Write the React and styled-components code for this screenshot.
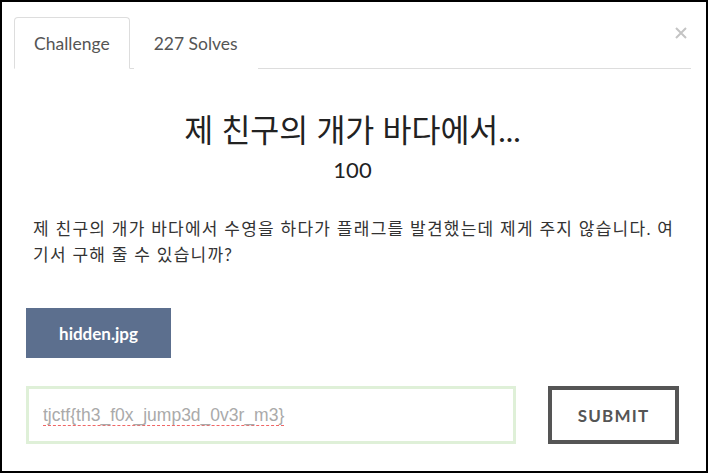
import React from "react";
import styled, { createGlobalStyle } from "styled-components";

const Global = createGlobalStyle`
  * { box-sizing: border-box; }
  html, body { margin: 0; padding: 0; background: #fff; }
  body { font-family: Lato, "Noto Sans CJK KR", sans-serif; color: #333; }
`;

const Frame = styled.div`
  width: 708px;
  height: 473px;
  border: 2px solid #000;
  background: #fff;
  position: relative;
  overflow: hidden;
`;

const Header = styled.div`
  padding: 15px 15px 0 12px;
`;

const TabList = styled.div`
  display: flex;
  border-bottom: 1px solid #ddd;
`;

const Tab = styled.div`
  height: 52px;
  padding: 0 19px;
  margin-right: 4px;
  margin-bottom: -1px;
  display: flex;
  align-items: center;
  font-family: Lato, sans-serif;
  font-size: 17.5px;
  color: #555;
  border: 1px solid ${(p) => (p.$active ? "#ddd" : "transparent")};
  border-bottom-color: ${(p) => (p.$active ? "#fff" : "transparent")};
  border-radius: 4px 4px 0 0;
  background: #fff;
`;

const Close = styled.button`
  position: absolute;
  top: 23px;
  right: 17px;
  width: 16px;
  height: 16px;
  padding: 0;
  border: 0;
  background: transparent;
  display: flex;
  align-items: center;
  justify-content: center;
`;

const Body = styled.div`
  padding: 0 27px 0 24px;
`;

const Title = styled.h1`
  margin: 39px 0 0;
  text-align: center;
  font-family: Lato, "Noto Sans CJK KR", sans-serif;
  font-weight: 400;
  font-size: 31.5px;
  line-height: 44px;
  color: #222;
`;

const Points = styled.div`
  margin-top: 3px;
  text-align: center;
  font-family: Lato, sans-serif;
  font-size: 22px;
  line-height: 30px;
  color: #222;
`;

const Description = styled.p`
  margin: 31px 0 0;
  padding-left: 7px;
  font-family: Lato, "Noto Sans CJK KR", sans-serif;
  font-size: 17px;
  letter-spacing: 1.25px;
  line-height: 25.6px;
  color: #333;
`;

const FileButton = styled.a`
  display: inline-flex;
  align-items: center;
  justify-content: center;
  width: 145px;
  height: 50px;
  margin-top: 41px;
  background: #5c6f8e;
  color: #fff;
  font-family: Lato, sans-serif;
  font-weight: 700;
  font-size: 17px;
  text-decoration: none;
`;

const SubmitRow = styled.div`
  display: grid;
  grid-template-columns: 490px 131px;
  column-gap: 32px;
  margin-top: 28px;
`;

const FlagInput = styled.input`
  height: 58px;
  border: 3px solid #dff0d8;
  padding: 0 14px;
  font-family: "Liberation Sans", Arial, sans-serif;
  font-size: 17.5px;
  color: #aaa;
  outline: none;
  text-decoration-line: underline;
  text-decoration-style: dashed;
  text-decoration-color: #f06666;
  text-decoration-thickness: 1px;
  text-underline-offset: 4px;
`;

const SubmitButton = styled.button`
  height: 58px;
  border: 4px solid #555;
  background: #fff;
  font-family: Lato, sans-serif;
  font-weight: 700;
  font-size: 17px;
  letter-spacing: 1.2px;
  color: #555;
`;

export default function App() {
  return (
    <>
      <Global />
      <Frame>
        <Header>
          <TabList>
            <Tab $active>Challenge</Tab>
            <Tab>227 Solves</Tab>
          </TabList>
        </Header>
        <Close aria-label="close">
          <svg width="12" height="12" viewBox="0 0 12 12">
            <path d="M1 1L11 11M11 1L1 11" stroke="#c4c4c4" strokeWidth="2" />
          </svg>
        </Close>
        <Body>
          <Title>제 친구의 개가 바다에서...</Title>
          <Points>100</Points>
          <Description>
            제 친구의 개가 바다에서 수영을 하다가 플래그를 발견했는데 제게 주지 않습니다. 여기서 구해 줄 수 있습니까?
          </Description>
          <FileButton href="#">hidden.jpg</FileButton>
          <SubmitRow>
            <FlagInput defaultValue="tjctf{th3_f0x_jump3d_0v3r_m3}" spellCheck={false} />
            <SubmitButton>SUBMIT</SubmitButton>
          </SubmitRow>
        </Body>
      </Frame>
    </>
  );
}
